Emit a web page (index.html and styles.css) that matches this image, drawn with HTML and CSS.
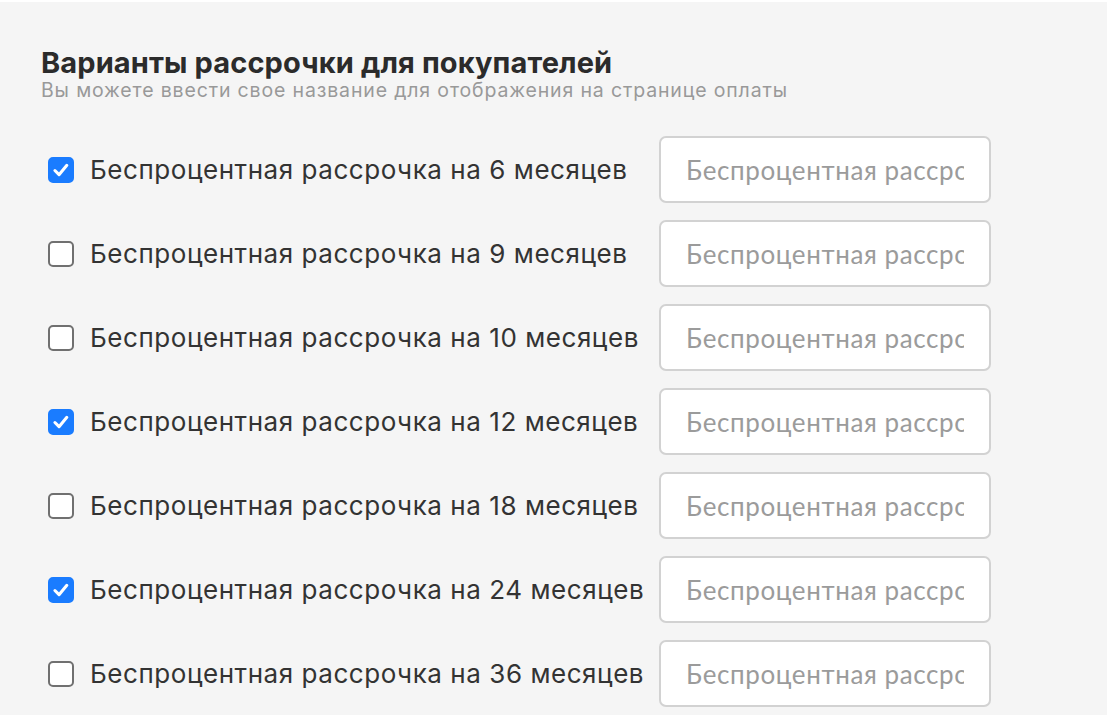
FILE: index.html
```html
<!DOCTYPE html>
<html lang="ru">
<head>
    <meta charset="UTF-8">
    <meta name="viewport" content="width=device-width, initial-scale=1.0">
    <title>Варианты рассрочки</title>
    <link rel="stylesheet" href="styles.css">
</head>
<body>

<div class="panel">
    <h2 class="title">Варианты рассрочки для покупателей</h2>
    <p class="subtitle">Вы можете ввести свое название для отображения на странице оплаты</p>

    <div class="options">
        <label class="option">
            <input type="checkbox" class="check" checked>
            <span class="option-text">Беспроцентная рассрочка на 6 месяцев</span>
        </label>
        <input type="text" class="name-field" placeholder="Беспроцентная рассрочка на 6 месяцев">

        <label class="option">
            <input type="checkbox" class="check">
            <span class="option-text">Беспроцентная рассрочка на 9 месяцев</span>
        </label>
        <input type="text" class="name-field" placeholder="Беспроцентная рассрочка на 9 месяцев">

        <label class="option">
            <input type="checkbox" class="check">
            <span class="option-text">Беспроцентная рассрочка на 10 месяцев</span>
        </label>
        <input type="text" class="name-field" placeholder="Беспроцентная рассрочка на 10 месяцев">

        <label class="option">
            <input type="checkbox" class="check" checked>
            <span class="option-text">Беспроцентная рассрочка на 12 месяцев</span>
        </label>
        <input type="text" class="name-field" placeholder="Беспроцентная рассрочка на 12 месяцев">

        <label class="option">
            <input type="checkbox" class="check">
            <span class="option-text">Беспроцентная рассрочка на 18 месяцев</span>
        </label>
        <input type="text" class="name-field" placeholder="Беспроцентная рассрочка на 18 месяцев">

        <label class="option">
            <input type="checkbox" class="check" checked>
            <span class="option-text">Беспроцентная рассрочка на 24 месяцев</span>
        </label>
        <input type="text" class="name-field" placeholder="Беспроцентная рассрочка на 24 месяцев">

        <label class="option">
            <input type="checkbox" class="check">
            <span class="option-text">Беспроцентная рассрочка на 36 месяцев</span>
        </label>
        <input type="text" class="name-field" placeholder="Беспроцентная рассрочка на 36 месяцев">
    </div>
</div>

</body>
</html>
```

FILE: styles.css
```css
body {
    margin: 0;
    padding: 2px 3px 0 0;
    background-color: #fff;
    font-family: Inter, "Noto Sans", sans-serif;
    color: #333;
}
.panel {
    background-color: #f5f5f5;
    min-height: 713px;
    padding: 44px 0 0 41px;
    box-sizing: border-box;
}
.title {
    margin: 0;
    font-size: 29px;
    font-weight: 700;
    letter-spacing: 0.12px;
    line-height: 33px;
    color: #2b2b2b;
}
.subtitle {
    margin: 0;
    font-size: 19.5px;
    letter-spacing: 0.85px;
    line-height: 23px;
    color: #999;
}
.options {
    display: grid;
    grid-template-columns: 618px 332px;
    row-gap: 17px;
    margin-top: 34px;
}
.option {
    display: flex;
    align-items: center;
    gap: 16px;
    padding-left: 7px;
    cursor: pointer;
}
.check {
    appearance: none;
    margin: 0;
    width: 26px;
    height: 26px;
    border: 2px solid #707070;
    border-radius: 5px;
    background-color: #fff;
    box-sizing: border-box;
    cursor: pointer;
}
.check:checked {
    border-color: #1a7cff;
    background-color: #1a7cff;
    background-image: url("data:image/svg+xml,%3Csvg xmlns='http://www.w3.org/2000/svg' viewBox='0 0 26 26'%3E%3Cpath d='M5.8 13.6l4.9 4.9 9.2-11' fill='none' stroke='%23fff' stroke-width='3.6' stroke-linecap='round' stroke-linejoin='round'/%3E%3C/svg%3E");
    background-size: 100% 100%;
    background-position: center;
}
.option-text {
    font-size: 26px;
    letter-spacing: 0.55px;
    color: #333;
    white-space: nowrap;
}
.name-field {
    height: 67px;
    box-sizing: border-box;
    padding: 0 25px;
    border: 2px solid #d2d2d2;
    border-radius: 7px;
    background-color: #fff;
    font-family: Lato, "Open Sans", sans-serif;
    font-size: 26px;
    letter-spacing: 0.6px;
    color: #333;
    outline: none;
}
.name-field::placeholder {
    color: #9b9b9b;
}
```
